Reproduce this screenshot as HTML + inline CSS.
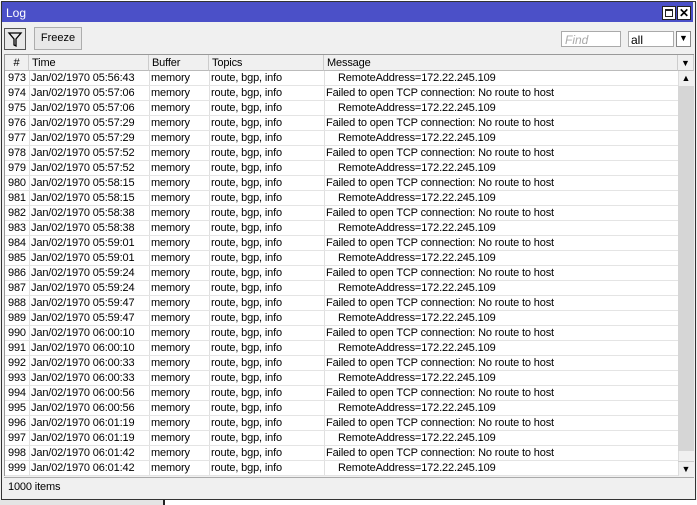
<!DOCTYPE html>
<html><head><style>
*{margin:0;padding:0;box-sizing:border-box}
body{width:697px;height:505px;background:#f0f0f0;position:relative;overflow:hidden;font-family:"Liberation Sans",sans-serif;font-size:11px;letter-spacing:-0.15px;color:#000}
.a{position:absolute}
#win{left:1px;top:1px;width:695px;height:499px;background:#f0f0f0;border:1px solid #333}
#title{left:2px;top:2px;width:691px;height:20px;background:#4b50c8;color:#fff;font-size:12px;letter-spacing:0;padding:4px 0 0 4px}
.tb{background:#f0f0f0;border:1px solid #555}
.btn{border:1px solid #adadad;background:#e8e8e8}
#grid{left:4px;top:54px;width:690px;height:422px;background:#fff;border:1px solid #999}
.hdr{position:absolute;top:0;height:16px;background:#f0f0f0;border-right:1px solid #ccc;border-bottom:1px solid #bbb;padding:2px 3px}
.row{position:absolute;left:0;width:673px;height:15px;border-bottom:1px solid #e4e4e4}
.c{position:absolute;top:1px;white-space:nowrap}
.vl{position:absolute;top:16px;width:1px;height:405px;background:#e0e0e0}
</style></head><body>
<div class="a" style="left:0;top:0;width:697px;height:2px;background:#fff"></div>
<div class="a" style="left:0;top:500px;width:163px;height:5px;background:#e4e4e4"></div>
<div class="a" style="left:163px;top:500px;width:2px;height:5px;background:#222"></div>
<div class="a" style="left:165px;top:500px;width:532px;height:5px;background:#fff"></div>
<div id="win" class="a"></div>
<div id="title" class="a">Log</div>
<div class="a tb" style="left:662px;top:6px;width:14px;height:14px;background:#fff;border:1px solid #222"><div style="margin:2px;width:8px;height:8px;border:1px solid #222;border-top-width:2px"></div></div>
<div class="a tb" style="left:677px;top:6px;width:14px;height:14px;background:#fff;border:1px solid #222;font-size:12px;font-weight:bold;line-height:12px;text-align:center;letter-spacing:0">✕</div>
<div class="a btn" style="left:4px;top:28px;width:22px;height:22px;border-color:#555">
<svg width="20" height="20" viewBox="0 0 20 20"><path d="M4 4H16L11 10V17L9 16V10Z" fill="none" stroke="#000" stroke-width="1.3"/></svg></div>
<div class="a btn" style="left:34px;top:27px;width:48px;height:23px;font-size:11px;letter-spacing:0;line-height:21px;text-align:center">Freeze</div>
<div class="a" style="left:561px;top:31px;width:60px;height:16px;background:#fff;border:1px solid #aaa;color:#aaa;font-style:italic;font-size:12px;letter-spacing:0;padding:1px 3px">Find</div>
<div class="a" style="left:628px;top:31px;width:46px;height:16px;background:#fff;border:1px solid #aaa;font-size:12px;letter-spacing:0;padding:1px 2px">all</div>
<div class="a" style="left:676px;top:31px;width:15px;height:16px;background:#fff;border:1px solid #888;font-size:9px;text-align:center;line-height:13px;letter-spacing:0">▼</div>
<div id="grid" class="a">
<div class="hdr" style="left:0;width:24px;text-align:center">#</div>
<div class="hdr" style="left:24px;width:120px">Time</div>
<div class="hdr" style="left:144px;width:60px">Buffer</div>
<div class="hdr" style="left:204px;width:115px">Topics</div>
<div class="hdr" style="left:319px;width:354px">Message</div>
<div class="hdr" style="left:673px;width:16px;font-size:9px;text-align:center;padding:3px 0;letter-spacing:0">▼</div>
<div class="vl" style="left:24px"></div><div class="vl" style="left:144px"></div><div class="vl" style="left:204px"></div><div class="vl" style="left:319px"></div>
<div id="rows"></div>
<div class="a" style="left:673px;top:16px;width:16px;height:405px;background:#f0f0f0;border-left:1px solid #ddd"></div>
<div class="a" style="left:673px;top:16px;width:16px;height:15px;font-size:9px;text-align:center;line-height:15px;letter-spacing:0">▲</div>
<div class="a" style="left:673px;top:31px;width:16px;height:365px;background:#d6d6d6"></div>
<div class="a" style="left:673px;top:406px;width:16px;height:15px;font-size:9px;text-align:center;line-height:15px;letter-spacing:0;border-top:1px solid #ccc">▼</div>
</div>
<div class="a" style="left:4px;top:477px;width:690px;height:19px;border-top:1px solid #aaa;padding:3px 4px;color:#000">1000 items</div>
<script>
var times=["05:56:43","05:57:06","05:57:06","05:57:29","05:57:29","05:57:52","05:57:52","05:58:15","05:58:15","05:58:38","05:58:38","05:59:01","05:59:01","05:59:24","05:59:24","05:59:47","05:59:47","06:00:10","06:00:10","06:00:33","06:00:33","06:00:56","06:00:56","06:01:19","06:01:19","06:01:42","06:01:42"];
var h="";
for(var i=0;i<27;i++){var n=973+i;var msg=(n%2==1)?'<span style="padding-left:12px">RemoteAddress=172.22.245.109</span>':'Failed to open TCP connection: No route to host';
h+='<div class="row" style="top:'+(16+i*15)+'px"><div class="c" style="left:3px">'+n+'</div><div class="c" style="left:26px">Jan/02/1970 '+times[i]+'</div><div class="c" style="left:146px">memory</div><div class="c" style="left:206px">route, bgp, info</div><div class="c" style="left:321px">'+msg+'</div></div>';}
document.getElementById('rows').innerHTML=h;
</script>
</body></html>
